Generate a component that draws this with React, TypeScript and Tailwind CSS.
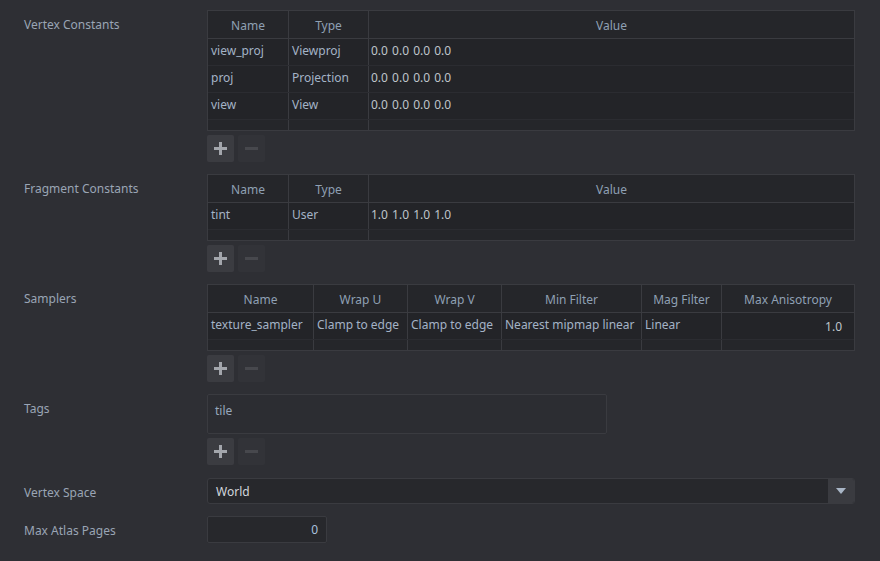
import React from "react";

const LABEL = "text-[#9aa5b5]";

function Label({ children }: { children: React.ReactNode }) {
  return (
    <div className={`w-[207px] shrink-0 pl-6 pt-[7px] leading-4 ${LABEL}`}>{children}</div>
  );
}

function Buttons() {
  return (
    <div className="mt-[4px] flex gap-[4px]">
      <div className="flex h-[27px] w-[27px] items-center justify-center rounded-[2px] bg-[#3b3c41]">
        <svg width="13" height="13" viewBox="0 0 13 13">
          <rect x="0" y="5" width="13" height="3" fill="#a3a6ac" />
          <rect x="5" y="0" width="3" height="13" fill="#a3a6ac" />
        </svg>
      </div>
      <div className="flex h-[27px] w-[27px] items-center justify-center rounded-[2px] bg-[#323338]">
        <svg width="13" height="13" viewBox="0 0 13 13">
          <rect x="0" y="5" width="13" height="3" fill="#47484d" />
        </svg>
      </div>
    </div>
  );
}

type Col = { title: string };

function Table({
  cols,
  gridClass,
  rows,
}: {
  cols: Col[];
  gridClass: string;
  rows: { text: string; cls?: string }[][];
}) {
  return (
    <div className="w-[648px] border border-[#3a3b40] bg-[#232428]">
      <div className={`grid ${gridClass} h-[28px] border-b border-[#3a3b40] bg-[#25262a]`}>
        {cols.map((c, i) => (
          <div
            key={i}
            className={`flex items-center justify-center pt-[2px] text-[#8fa0b4] ${
              i < cols.length - 1 ? "border-r border-[#3a3b40]" : ""
            }`}
          >
            {c.title}
          </div>
        ))}
      </div>
      {rows.map((r, ri) => (
        <div key={ri} className={`grid ${gridClass} h-[27px] border-b border-[#2b2c31]`}>
          {r.map((c, ci) => (
            <div
              key={ci}
              className={`overflow-hidden whitespace-nowrap leading-4 ${c.cls ?? "pl-[3px] pt-[4px] text-[#a3b3c6]"} ${
                ci < r.length - 1 ? "border-r border-[#3a3b40]" : ""
              }`}
            >
              {c.text}
            </div>
          ))}
        </div>
      ))}
      <div className={`grid ${gridClass} h-[10px] bg-[#25262a]`}>
        {cols.map((_, i) => (
          <div key={i} className={i < cols.length - 1 ? "border-r border-[#3a3b40]" : ""} />
        ))}
      </div>
    </div>
  );
}

const VAL = "pl-[2px] pt-[4px] text-[#bfc4cb] [word-spacing:1px]";

export default function App() {
  const constCols: Col[] = [{ title: "Name" }, { title: "Type" }, { title: "Value" }];
  const g3 = "grid-cols-[81px_80px_1fr]";
  const g6 = "grid-cols-[106px_94px_94px_140px_80px_1fr]";
  return (
    <div className="min-h-[561px] w-[880px] bg-[#2e2f34] pt-[10px] font-['Noto_Sans',sans-serif] text-[12px]">
      {/* Vertex Constants */}
      <div className="flex">
        <Label>Vertex Constants</Label>
        <div>
          <Table
            cols={constCols}
            gridClass={g3}
            rows={[
              [{ text: "view_proj" }, { text: "Viewproj" }, { text: "0.0 0.0 0.0 0.0", cls: VAL }],
              [{ text: "proj" }, { text: "Projection" }, { text: "0.0 0.0 0.0 0.0", cls: VAL }],
              [{ text: "view" }, { text: "View" }, { text: "0.0 0.0 0.0 0.0", cls: VAL }],
            ]}
          />
          <Buttons />
        </div>
      </div>

      {/* Fragment Constants */}
      <div className="mt-[12px] flex">
        <Label>Fragment Constants</Label>
        <div>
          <Table
            cols={constCols}
            gridClass={g3}
            rows={[[{ text: "tint" }, { text: "User" }, { text: "1.0 1.0 1.0 1.0", cls: VAL }]]}
          />
          <Buttons />
        </div>
      </div>

      {/* Samplers */}
      <div className="mt-[12px] flex">
        <Label>Samplers</Label>
        <div>
          <Table
            cols={[
              { title: "Name" },
              { title: "Wrap U" },
              { title: "Wrap V" },
              { title: "Min Filter" },
              { title: "Mag Filter" },
              { title: "Max Anisotropy" },
            ]}
            gridClass={g6}
            rows={[
              [
                { text: "texture_sampler" },
                { text: "Clamp to edge" },
                { text: "Clamp to edge" },
                { text: "Nearest mipmap linear" },
                { text: "Linear" },
                { text: "1.0", cls: "pt-[6px] pr-[12px] text-right text-[#bfc4cb]" },
              ],
            ]}
          />
          <Buttons />
        </div>
      </div>

      {/* Tags */}
      <div className="mt-[12px] flex">
        <Label>Tags</Label>
        <div>
          <div className="h-[40px] w-[400px] rounded-[2px] border border-[#3a3b40] bg-[#2c2d32] pl-[7px] pt-[8px] leading-4 text-[#97a8bc]">
            tile
          </div>
          <Buttons />
        </div>
      </div>

      {/* Vertex Space */}
      <div className="mt-[13px] flex">
        <Label>Vertex Space</Label>
        <div className="flex h-[26px] w-[648px] overflow-hidden rounded-[3px] border border-[#3a3b40] bg-[#27282c]">
          <div className="flex flex-1 items-center pl-[8px] pt-[2px] text-[#d2d6dc]">World</div>
          <div className="flex w-[26px] items-center justify-center bg-[#3a3b40]">
            <svg width="10" height="6" viewBox="0 0 10 6">
              <polygon points="0,0 10,0 5,6" fill="#a9b6c6" />
            </svg>
          </div>
        </div>
      </div>

      {/* Max Atlas Pages */}
      <div className="mt-[12px] flex">
        <Label>Max Atlas Pages</Label>
        <div className="flex h-[27px] w-[120px] items-center justify-end rounded-[2px] border border-[#3a3b40] bg-[#27282c] pr-[8px] pt-[1px] text-[#a9c1de]">
          0
        </div>
      </div>
    </div>
  );
}
